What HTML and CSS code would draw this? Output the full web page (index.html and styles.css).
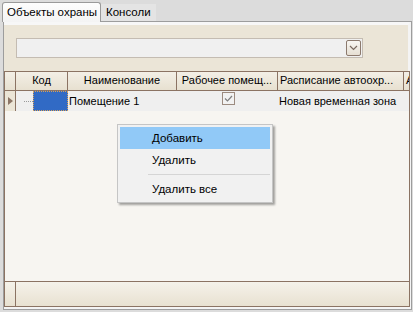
FILE: index.html
```html
<!DOCTYPE html>
<html lang="ru">
<head>
  <meta charset="UTF-8">
  <title>Объекты охраны</title>
  <link rel="stylesheet" href="styles.css">
</head>
<body>
  <div class="tabs">
    <div class="tab active">Объекты охраны</div>
    <div class="tab">Консоли</div>
  </div>

  <div class="tab-page">
    <div class="filter">
      <div class="combo">
        <span class="combo-btn">
          <svg width="9" height="6" viewBox="0 0 9 6"><path d="M1 1 L4.5 4.5 L8 1" fill="none" stroke="#7a6a60" stroke-width="1.2"/></svg>
        </span>
      </div>
    </div>

    <div class="grid">
      <div class="row head">
        <div class="cell ind"></div>
        <div class="cell c-code">Код</div>
        <div class="cell c-name">Наименование</div>
        <div class="cell c-work">Рабочее помещ...</div>
        <div class="cell c-sched">Расписание автоохр...</div>
        <div class="cell c-last">А</div>
      </div>

      <div class="row data">
        <div class="cell ind">
          <svg width="5" height="8" viewBox="0 0 5 8"><path d="M0 0 L5 4 L0 8 Z" fill="#8c7566"/></svg>
        </div>
        <div class="cell c-code">
          <span class="tree-dots"></span>
          <span class="selected"></span>
        </div>
        <div class="cell c-name">Помещение 1</div>
        <div class="cell c-work">
          <span class="check">
            <svg width="9" height="7" viewBox="0 0 9 7"><path d="M1 3.5 L3.5 6 L8 1" fill="none" stroke="#7f7f7f" stroke-width="1.2"/></svg>
          </span>
        </div>
        <div class="cell c-sched">Новая временная зона</div>
      </div>

      <div class="grid-body"></div>

      <div class="row foot">
        <div class="cell ind"></div>
        <div class="cell"></div>
      </div>
    </div>
  </div>

  <!-- Context menu -->
  <div class="menu">
    <div class="menu-item hover">Добавить</div>
    <div class="menu-item">Удалить</div>
    <div class="menu-sep"></div>
    <div class="menu-item">Удалить все</div>
  </div>
</body>
</html>
```

FILE: styles.css
```css
body {
  margin: 0;
  width: 413px;
  height: 312px;
  overflow: hidden;
  position: relative;
  background-color: #dcdcdc;
  font-family: "Liberation Sans", Arial, sans-serif;
  font-size: 11px;
  color: #000;
}
.tabs {
  display: flex;
  align-items: flex-end;
  height: 22px;
  padding-left: 2px;
  margin-bottom: -1px;
  white-space: nowrap;
}
.tab {
  box-sizing: border-box;
  width: 55px;
  height: 17px;
  line-height: 16px;
  padding: 0 0 0 5px;
  background-color: #e4e4e4;
  margin-bottom: 1px;
  font-size: 11.5px;
}
.tab.active {
  position: relative;
  z-index: 1;
  width: 99px;
  height: 20px;
  line-height: 19px;
  padding-left: 4px;
  margin-bottom: 0;
  border: 1px solid #9a9a9a;
  border-bottom: none;
  border-radius: 3px 3px 0 0;
  background: linear-gradient(#fdfdfd, #f4f4f4);
}
.tab-page {
  box-sizing: border-box;
  margin-left: 3px;
  width: 409px;
  height: 289px;
  border: 1px solid #9d9d9d;
  background-color: #f4f4f4;
  padding: 0 1px 2px 0;
  display: flex;
  flex-direction: column;
}
.filter {
  box-sizing: border-box;
  height: 49px;
  border-top: 3px solid #f7f7f7;
  border-right: 2px solid #f4f4f4;
  background-color: #ebe5d7;
  padding: 13px 0 0 12px;
}
.combo {
  box-sizing: border-box;
  width: 347px;
  height: 20px;
  border: 1px solid #c4bcb2;
  background-color: #f0f0f0;
  display: flex;
  align-items: center;
  justify-content: flex-end;
  padding-right: 1px;
}
.combo-btn {
  box-sizing: border-box;
  width: 15px;
  height: 16px;
  border: 1px solid #8c7a6e;
  border-radius: 2px;
  background: linear-gradient(#f8f6f2, #e6dfd3);
  display: flex;
  align-items: center;
  justify-content: center;
}
.grid {
  flex: 1;
  border: 1px solid #8b7363;
  background-color: #f7f5f0;
  display: flex;
  flex-direction: column;
  overflow: hidden;
}
.row {
  display: flex;
}
.cell {
  box-sizing: border-box;
  white-space: nowrap;
  overflow: hidden;
}
.ind { width: 11px; flex: none; }
.c-code { width: 52px; flex: none; }
.c-name { width: 109px; flex: none; }
.c-work { width: 101px; flex: none; }
.c-sched { width: 126px; flex: none; }
.c-last { flex: 1; }

.head {
  height: 18px;
  border-bottom: 1px solid #8b7363;
  background: linear-gradient(#f3efe6, #e7e0d0);
}
.head .cell {
  line-height: 17px;
  text-align: center;
  border-right: 1px solid #8b7363;
}
.head .c-sched,
.head .c-last {
  text-align: left;
  padding-left: 2px;
}
.head .c-last {
  border-right: none;
}
.data {
  height: 20px;
  line-height: 20px;
  background-color: #efefef;
}
.data .ind {
  border-right: 1px solid #8b7363;
  background-color: #ebe5d7;
  display: flex;
  align-items: center;
  padding-left: 3px;
}
.data .c-code {
  display: flex;
  align-items: center;
}
.tree-dots {
  width: 9px;
  margin: 0 0 0 8px;
  border-top: 1px dotted #9a9a9a;
}
.selected {
  box-sizing: border-box;
  width: 35px;
  height: 20px;
  background-color: #316ac5;
  border: 1px dotted #d9a15a;
}
.data .c-name,
.data .c-sched {
  padding-left: 1px;
}
.data .c-work {
  display: flex;
  justify-content: center;
  padding-top: 1px;
  padding-left: 1px;
}
.check {
  box-sizing: border-box;
  width: 13px;
  height: 13px;
  border: 1px solid #9c8b80;
  background-color: #f2f2f2;
  display: flex;
  align-items: center;
  justify-content: center;
}
.grid-body {
  flex: 1;
  background-color: #f7f5f1;
}
.foot {
  height: 24px;
  border-top: 1px solid #8b7363;
  background: linear-gradient(#f5f2ea, #e8e1d1);
}
.foot .ind {
  border-right: 1px solid #8b7363;
}

.menu {
  position: absolute;
  left: 117px;
  top: 124px;
  width: 156px;
  box-sizing: border-box;
  border: 1px solid #c5c5c5;
  background-color: #f1f1f1;
  padding: 2px;
  box-shadow: 2px 2px 2px rgba(0, 0, 0, 0.35);
  font-size: 11.5px;
}
.menu-item {
  height: 22px;
  line-height: 22px;
  padding-left: 32px;
}
.menu-item.hover {
  background-color: #91c9f7;
}
.menu-sep {
  height: 1px;
  margin: 3px 0 3px 28px;
  background-color: #d5d5d5;
}
```
